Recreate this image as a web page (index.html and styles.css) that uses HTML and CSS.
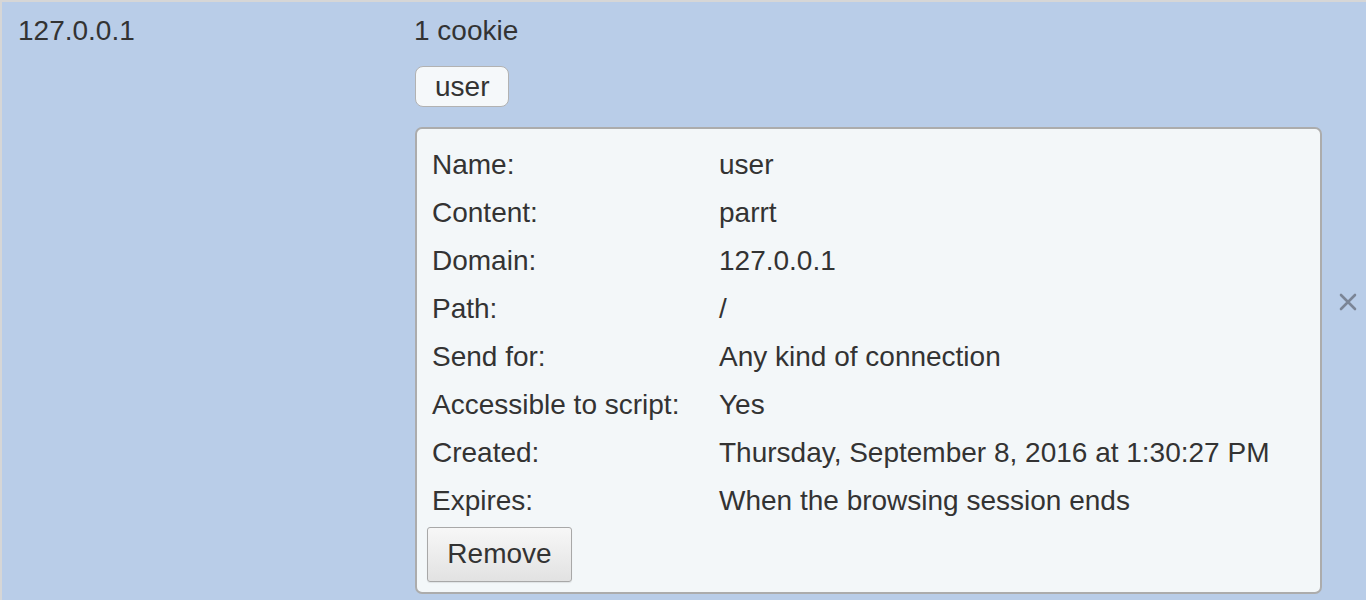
FILE: index.html
```html
<!DOCTYPE html>
<html>
<head>
<meta charset="utf-8">
<link rel="stylesheet" href="styles.css">
</head>
<body>
<div class="site">
  <div class="host">127.0.0.1</div>
  <div class="cookies">
    <div class="count">1 cookie</div>
    <button class="chip">user</button>
    <div class="panel">
      <div class="grid">
        <div class="label">Name:</div><div class="value">user</div>
        <div class="label">Content:</div><div class="value">parrt</div>
        <div class="label">Domain:</div><div class="value">127.0.0.1</div>
        <div class="label">Path:</div><div class="value">/</div>
        <div class="label">Send for:</div><div class="value">Any kind of connection</div>
        <div class="label">Accessible to script:</div><div class="value">Yes</div>
        <div class="label">Created:</div><div class="value">Thursday, September 8, 2016 at 1:30:27 PM</div>
        <div class="label">Expires:</div><div class="value">When the browsing session ends</div>
      </div>
      <button class="remove">Remove</button>
    </div>
  </div>
  <div class="close">
    <svg width="20" height="20" viewBox="0 0 20 20"><path d="M3 3 L17 17 M17 3 L3 17" stroke="#7b8596" stroke-width="2.6" stroke-linecap="round"/></svg>
  </div>
</div>
</body>
</html>
```
FILE: styles.css
```css
html, body {
  margin: 0;
  padding: 0;
}
body {
  font-family: "Liberation Sans", Arial, sans-serif;
  font-size: 28px;
  color: #333;
  background: #b9cde8;
}
.site {
  display: flex;
  height: 598px;
  border-top: 2px solid #d6d6d6;
  border-left: 2px solid #d6d6d6;
  background: #b9cde8;
  overflow: hidden;
}
.host {
  width: 396px;
  padding: 15px 0 0 16px;
  line-height: 28px;
}
.cookies {
  width: 907px;
  padding-top: 15px;
  display: flex;
  flex-direction: column;
  align-items: flex-start;
}
.count {
  line-height: 28px;
  margin-bottom: 21px;
}
.chip {
  font: inherit;
  color: #333;
  line-height: 27px;
  padding: 6px 19px 6px 19px;
  border: 1px solid #b2b2b2;
  border-radius: 8px;
  background: #f5f8fa;
  margin: 0 0 20px 1px;
}
.panel {
  box-sizing: border-box;
  width: 907px;
  margin-left: 1px;
  background: #f3f7f9;
  border: 2px solid #acacac;
  border-radius: 7px;
  padding: 12px 10px 10px 10px;
}
.grid {
  display: grid;
  grid-template-columns: 287px 1fr;
  grid-auto-rows: 48px;
  align-items: center;
  padding-left: 5px;
}
.label, .value {
  line-height: 28px;
  white-space: nowrap;
}
.remove {
  font: inherit;
  color: #333;
  margin-top: 2px;
  width: 145px;
  height: 55px;
  padding: 0 0 2px 0;
  border: 1px solid #a8a8a8;
  border-radius: 3px;
  background: linear-gradient(#f7f7f7, #e2e2e2);
  box-shadow: 0 1px 1px rgba(0,0,0,0.08);
}
.close {
  flex: 1;
  display: flex;
  align-items: center;
  justify-content: flex-start;
  padding-left: 17px;
  padding-top: 1px;
}
.close svg {
  display: block;
}
```
